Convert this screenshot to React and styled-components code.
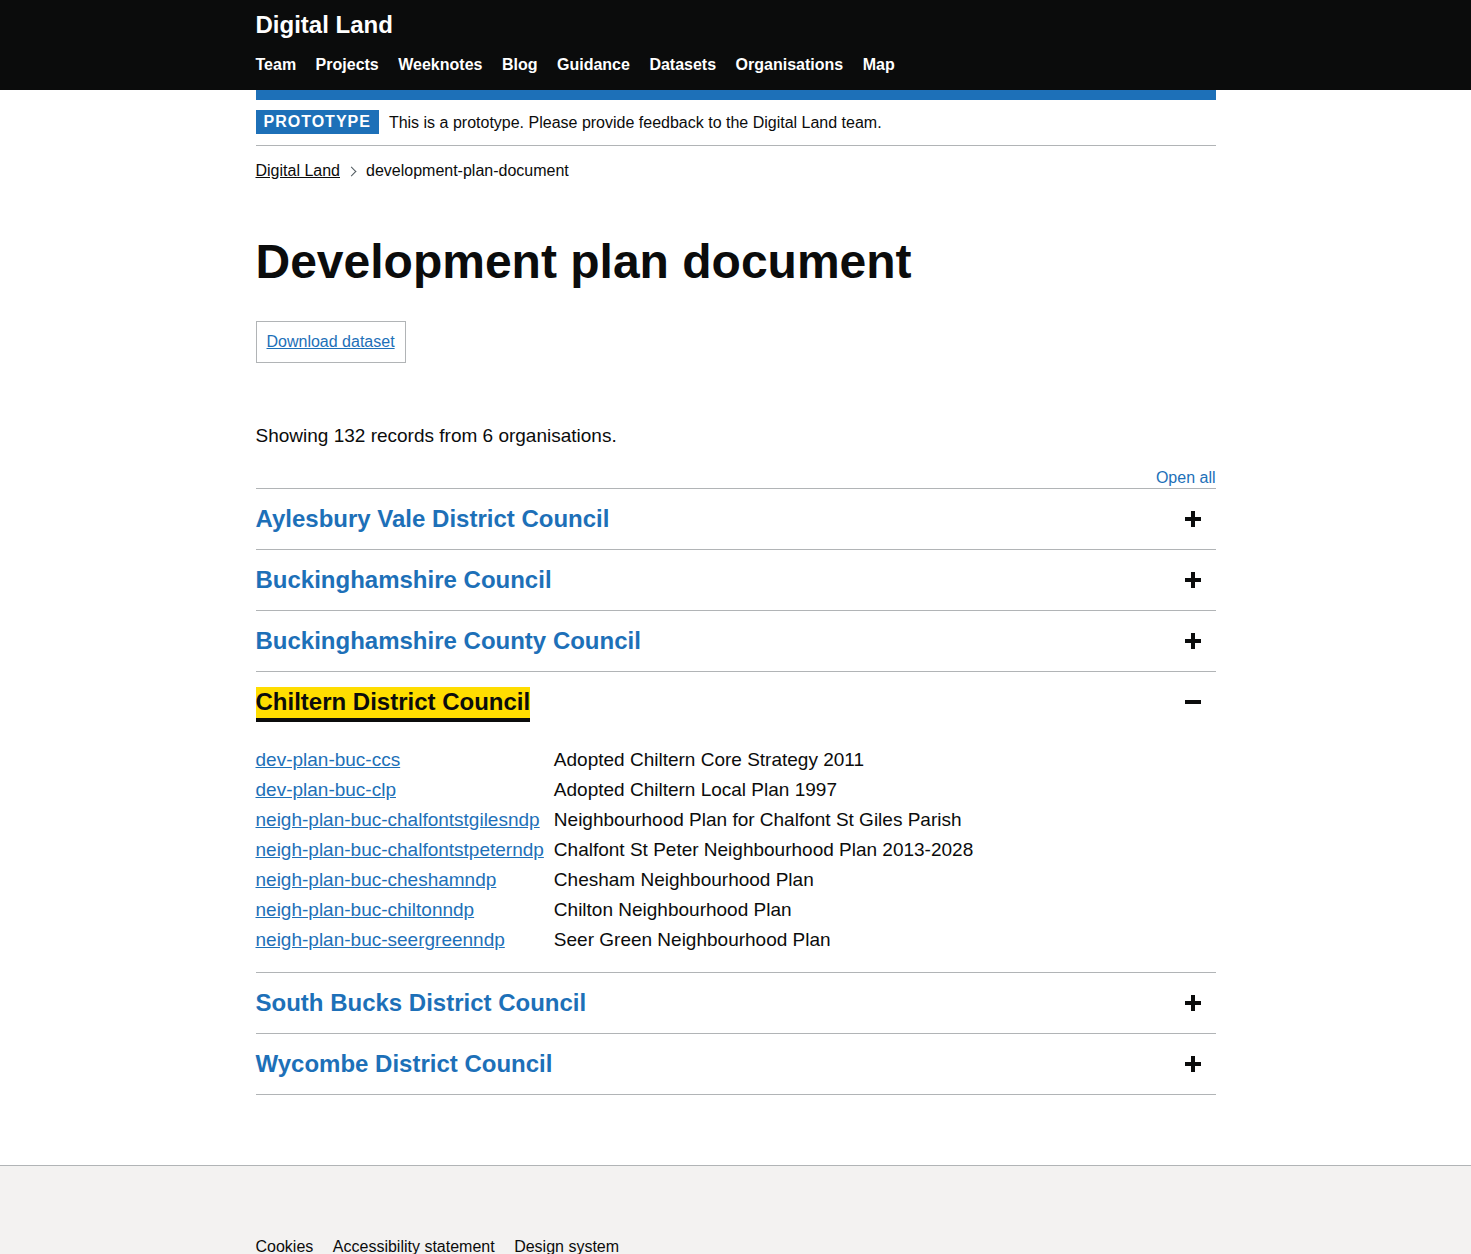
import React, { useState } from 'react';
import styled, { createGlobalStyle } from 'styled-components';

const GlobalStyle = createGlobalStyle`
  * { box-sizing: border-box; }
  body {
    margin: 0;
    font-family: "Liberation Sans", Arial, sans-serif;
    color: #0b0c0c;
    background: #fff;
  }
`

const Container = styled.div`
  width: 960px;
  margin: 0 auto;
`

const Header = styled.header`
  background: #0b0c0c;
  color: #fff;
  height: 90px;
`

const HeaderInner = styled(Container)`
  padding-top: 10px;
`

const Brand = styled.a`
  display: block;
  font-size: 24px;
  font-weight: 700;
  line-height: 30px;
  color: #fff;
  text-decoration: none;
`

const Nav = styled.nav`
  display: flex;
  gap: 19.5px;
  margin-top: 15px;
  a {
    color: #fff;
    font-size: 16px;
    font-weight: 700;
    line-height: 20px;
    text-decoration: none;
  }
`

const BlueBar = styled.div`
  height: 10px;
  background: #1d70b8;
`

const PhaseBanner = styled.div`
  display: flex;
  align-items: flex-start;
  gap: 10px;
  padding: 10px 0;
  border-bottom: 1px solid #b1b4b6;
  font-size: 16px;
  line-height: 24px;
  span { padding-top: 1px; }
`

const Tag = styled.strong`
  display: inline-block;
  background: #1d70b8;
  color: #fff;
  font-size: 16px;
  font-weight: 700;
  letter-spacing: 1px;
  line-height: 24px;
  padding: 0 8px;
  text-transform: uppercase;
`

const Breadcrumbs = styled.ol`
  display: flex;
  align-items: center;
  list-style: none;
  margin: 15px 0 0;
  padding: 0;
  font-size: 16px;
  line-height: 20px;
  li + li::before {
    content: "";
    display: inline-block;
    width: 6px;
    height: 6px;
    margin: 0 11px 1px 8px;
    border-top: 1px solid #505a5f;
    border-right: 1px solid #505a5f;
    transform: rotate(45deg);
  }
  a { color: #0b0c0c; text-decoration: underline; }
`

const Title = styled.h1`
  font-size: 48px;
  font-weight: 700;
  line-height: 50px;
  margin: 56px 0 34px;
`

const DownloadBox = styled.div`
  display: inline-block;
  border: 1px solid #b1b4b6;
  padding: 10px;
  font-size: 16px;
  line-height: 20px;
  a { color: #1d70b8; text-decoration: underline; }
`

const Lead = styled.p`
  font-size: 19px;
  line-height: 25px;
  margin: 60px 0 20px;
`

const Controls = styled.div`
  text-align: right;
  font-size: 16px;
  line-height: 20px;
  a { color: #1d70b8; text-decoration: none; }
`

const Accordion = styled.div`
  border-bottom: 1px solid #b1b4b6;
`

const Section = styled.div`
  border-top: 1px solid #b1b4b6;
`

const SectionHeader = styled.button`
  display: flex;
  width: 100%;
  height: 60px;
  align-items: center;
  justify-content: space-between;
  padding: 0 15px 0 0;
  margin: 0;
  background: none;
  border: 0;
  cursor: pointer;
  font-family: inherit;
  text-align: left;
`

const SectionTitle = styled.span`
  font-size: 24px;
  font-weight: 700;
  line-height: 30px;
  color: ${p => (p.$focused ? '#0b0c0c' : '#1d70b8')};
  background: ${p => (p.$focused ? '#ffdd00' : 'transparent')};
  box-shadow: ${p => (p.$focused ? '0 4px #0b0c0c' : 'none')};
  padding-bottom: ${p => (p.$focused ? '1px' : '0')};
`

const Icon = styled.span`
  position: relative;
  width: 16px;
  height: 16px;
  &::before, &::after {
    content: "";
    position: absolute;
    background: #0b0c0c;
  }
  &::before { left: 0; top: 6px; width: 16px; height: 4px; }
  &::after {
    left: 6px; top: 0; width: 4px; height: 16px;
    display: ${p => (p.$open ? 'none' : 'block')};
  }
`

const Content = styled.div`
  padding: 13px 0 17px;
`

const Records = styled.table`
  border-collapse: collapse;
  font-size: 19px;
  line-height: 24px;
  td { padding: 3px 10px 3px 0; vertical-align: top; }
  a { color: #1d70b8; text-decoration: underline; }
`

const Footer = styled.footer`
  margin-top: 70px;
  background: #f3f2f1;
  border-top: 1px solid #b1b4b6;
  padding: 71px 0 25px;
`

const FooterLinks = styled.ul`
  display: flex;
  gap: 19.5px;
  list-style: none;
  margin: 0;
  padding: 0;
  font-size: 16px;
  line-height: 20px;
  a { color: #0b0c0c; text-decoration: none; }
`

const navItems = ['Team', 'Projects', 'Weeknotes', 'Blog', 'Guidance', 'Datasets', 'Organisations', 'Map'];

const chiltern = [
  ['dev-plan-buc-ccs', 'Adopted Chiltern Core Strategy 2011'],
  ['dev-plan-buc-clp', 'Adopted Chiltern Local Plan 1997'],
  ['neigh-plan-buc-chalfontstgilesndp', 'Neighbourhood Plan for Chalfont St Giles Parish'],
  ['neigh-plan-buc-chalfontstpeterndp', 'Chalfont St Peter Neighbourhood Plan 2013-2028'],
  ['neigh-plan-buc-cheshamndp', 'Chesham Neighbourhood Plan'],
  ['neigh-plan-buc-chiltonndp', 'Chilton Neighbourhood Plan'],
  ['neigh-plan-buc-seergreenndp', 'Seer Green Neighbourhood Plan'],
];

const organisations = [
  { name: 'Aylesbury Vale District Council', records: [] },
  { name: 'Buckinghamshire Council', records: [] },
  { name: 'Buckinghamshire County Council', records: [] },
  { name: 'Chiltern District Council', records: chiltern },
  { name: 'South Bucks District Council', records: [] },
  { name: 'Wycombe District Council', records: [] },
];

export default function App() {
  const [open, setOpen] = useState({ 'Chiltern District Council': true });
  const toggle = name => setOpen(s => ({ ...s, [name]: !s[name] }));

  return (
    <>
      <GlobalStyle />
      <Header>
        <HeaderInner>
          <Brand href="#">Digital Land</Brand>
          <Nav>
            {navItems.map(item => <a key={item} href="#">{item}</a>)}
          </Nav>
        </HeaderInner>
      </Header>
      <Container>
        <BlueBar />
        <PhaseBanner>
          <Tag>Prototype</Tag>
          <span>This is a prototype. Please provide feedback to the Digital Land team.</span>
        </PhaseBanner>
        <Breadcrumbs>
          <li><a href="#">Digital Land</a></li>
          <li>development-plan-document</li>
        </Breadcrumbs>
        <Title>Development plan document</Title>
        <DownloadBox><a href="#">Download dataset</a></DownloadBox>
        <Lead>Showing 132 records from 6 organisations.</Lead>
        <Controls><a href="#">Open all</a></Controls>
        <Accordion>
          {organisations.map(org => {
            const isOpen = !!open[org.name];
            return (
              <Section key={org.name}>
                <SectionHeader onClick={() => toggle(org.name)}>
                  <SectionTitle $focused={isOpen}>{org.name}</SectionTitle>
                  <Icon $open={isOpen} />
                </SectionHeader>
                {isOpen && (
                  <Content>
                    <Records>
                      <tbody>
                        {org.records.map(([ref, label]) => (
                          <tr key={ref}>
                            <td><a href="#">{ref}</a></td>
                            <td>{label}</td>
                          </tr>
                        ))}
                      </tbody>
                    </Records>
                  </Content>
                )}
              </Section>
            );
          })}
        </Accordion>
      </Container>
      <Footer>
        <Container>
          <FooterLinks>
            <li><a href="#">Cookies</a></li>
            <li><a href="#">Accessibility statement</a></li>
            <li><a href="#">Design system</a></li>
          </FooterLinks>
        </Container>
      </Footer>
    </>
  );
}
